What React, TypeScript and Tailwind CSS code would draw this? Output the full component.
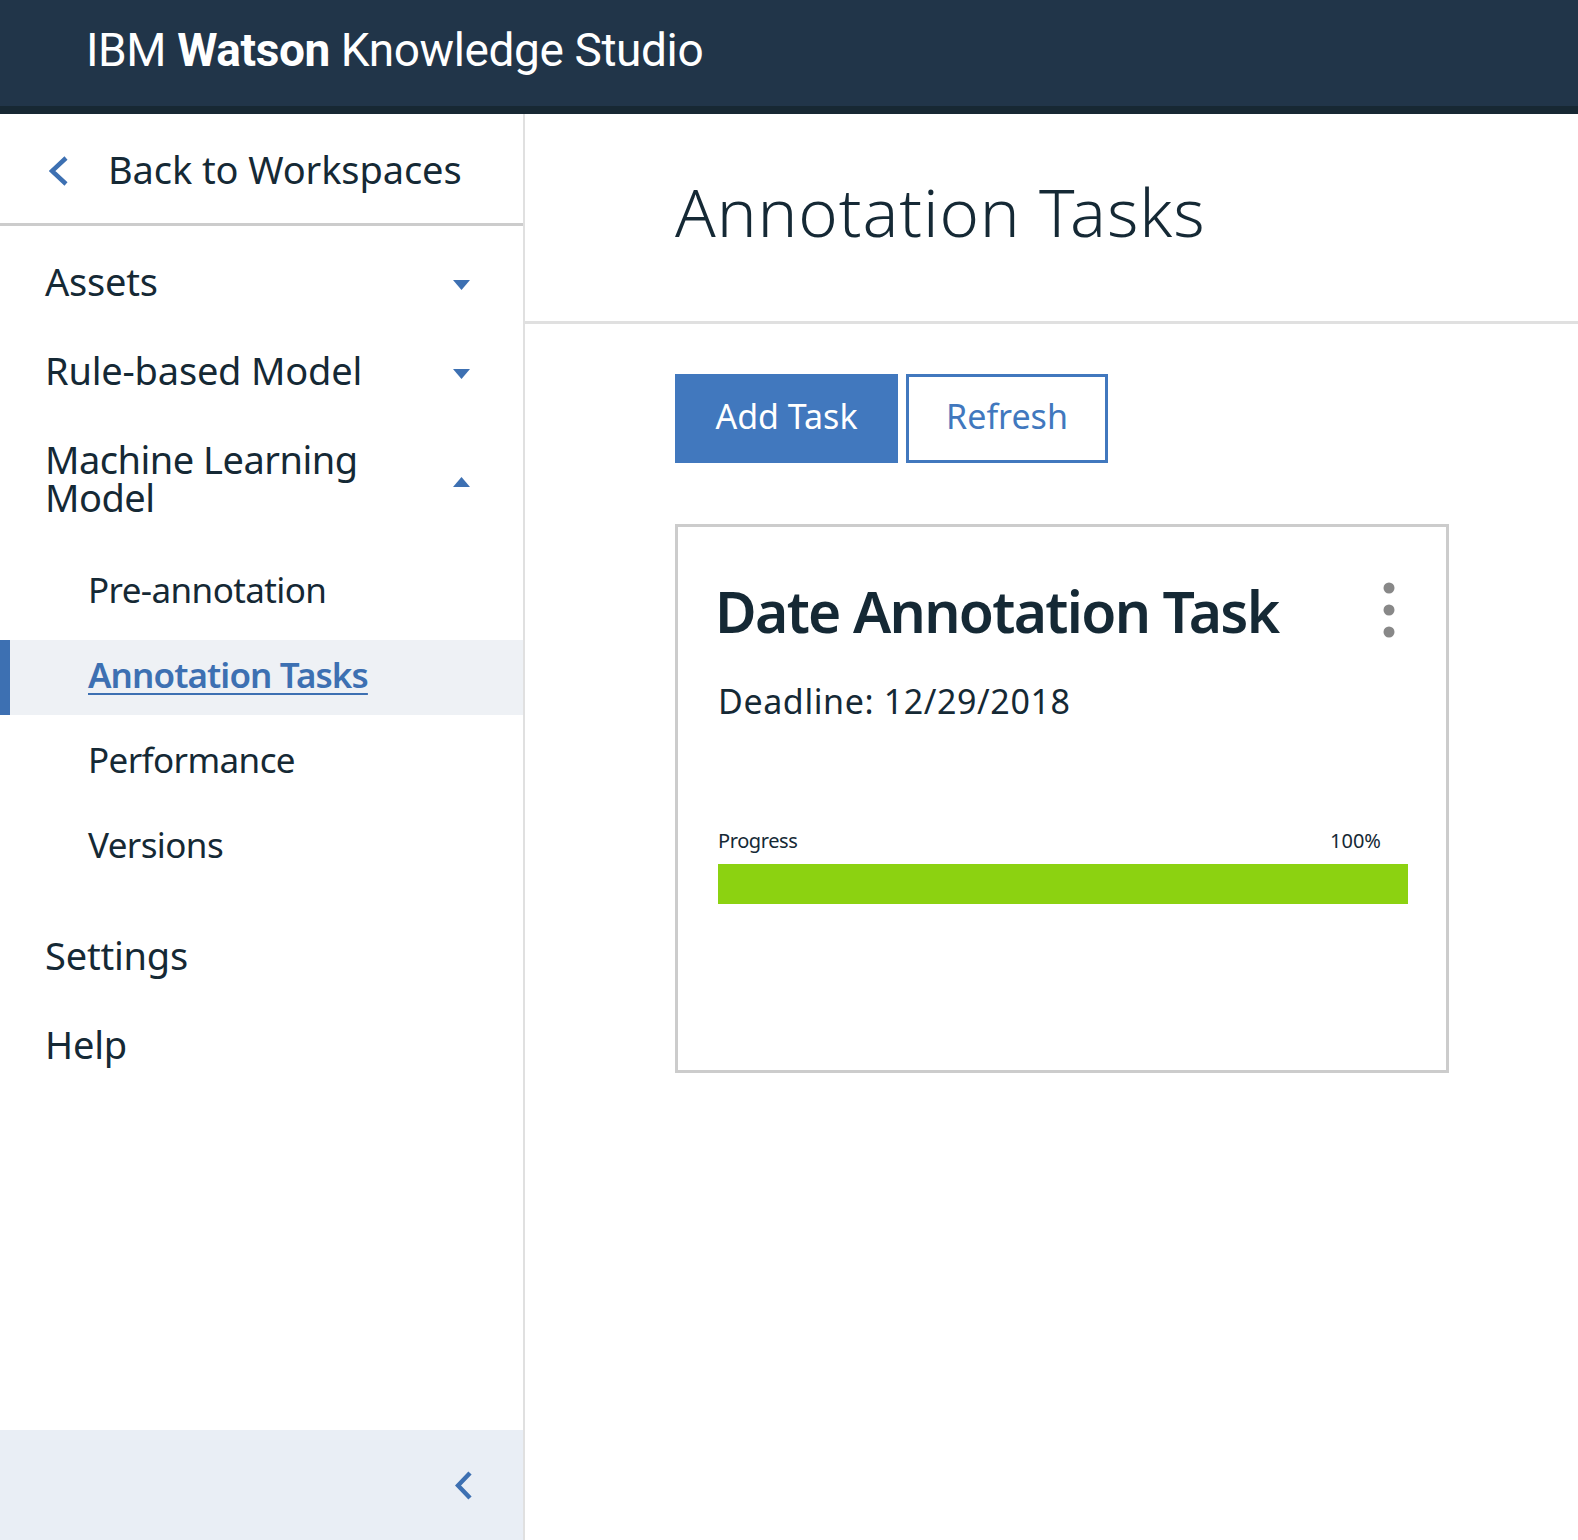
import React from "react";

function Triangle({ up = false }: { up?: boolean }) {
  return (
    <svg width="17" height="10" viewBox="0 0 17 10" className="shrink-0">
      {up ? <polygon points="0,10 17,10 8.5,0" fill="#3d70b2" /> : <polygon points="0,0 17,0 8.5,10" fill="#3d70b2" />}
    </svg>
  );
}

function Chevron({ w, h }: { w: number; h: number }) {
  return (
    <svg width={w} height={h} viewBox={`0 0 ${w} ${h}`} className="shrink-0">
      <polyline
        points={`${w - 3},2 3,${h / 2} ${w - 3},${h - 2}`}
        fill="none"
        stroke="#3d70b2"
        strokeWidth="4.5"
        strokeLinejoin="miter"
      />
    </svg>
  );
}

function TopItem({ label, icon }: { label: string; icon?: "down" | "up" }) {
  return (
    <div className="h-[89px] flex items-center justify-between pl-[45px] pr-[53px]">
      <span className="text-[38px] leading-[38px] text-[#152935] tracking-[-0.2px]">{label}</span>
      {icon && (
        <span className="mt-[9px]">
          <Triangle up={icon === "up"} />
        </span>
      )}
    </div>
  );
}

function SubItem({ label, active = false }: { label: string; active?: boolean }) {
  return (
    <div className={`h-[75px] flex items-center pb-[6px] pl-[88px] relative ${active ? "bg-[#eef1f5]" : ""}`}>
      {active && <div className="absolute left-0 top-0 bottom-0 w-[10px] bg-[#3d70b2]" />}
      <span
        className={`text-[35px] leading-[35px] ${
          active
            ? "font-semibold text-[#3d70b2] underline underline-offset-[5px] decoration-[2px] tracking-[-0.9px]"
            : "text-[#152935] tracking-[-0.6px]"
        }`}
      >
        {label}
      </span>
    </div>
  );
}

export default function App() {
  return (
    <div className="w-full h-[1540px] flex flex-col font-['Noto_Sans',sans-serif] bg-white overflow-hidden">
      {/* Header */}
      <header className="h-[106px] bg-[#213549] flex items-start pt-[27px] pl-[86px] shrink-0">
        <span className="font-['Roboto',sans-serif] text-[46px] leading-[46px] text-white tracking-[-0.4px]">
          IBM <span className="font-bold">Watson</span> Knowledge Studio
        </span>
      </header>
      <div className="h-[8px] bg-[#172833] shrink-0" />

      <div className="flex flex-1 min-h-0">
        {/* Sidebar */}
        <aside className="w-[525px] shrink-0 border-r-2 border-[#e0e0e0] flex flex-col">
          <div className="h-[109px] flex items-center pl-[49px] shrink-0">
            <span className="mt-[5px]">
              <Chevron w={20} h={30} />
            </span>
            <span className="ml-[39px] text-[38px] leading-[38px] text-[#152935] tracking-[-0.1px]">
              Back to Workspaces
            </span>
          </div>
          <div className="h-[3px] bg-[#cccccc] shrink-0" />

          <nav className="pt-[10px] flex flex-col">
            <TopItem label="Assets" icon="down" />
            <TopItem label="Rule-based Model" icon="down" />
            <div className="flex items-start justify-between pl-[45px] pr-[53px] pt-[26px]">
              <span className="text-[38px] leading-[38px] text-[#152935] w-[330px] tracking-[-0.5px]">
                Machine Learning Model
              </span>
              <span className="mt-[37px]">
                <Triangle up />
              </span>
            </div>
            <div className="mt-[39px] flex flex-col gap-[10px]">
              <SubItem label="Pre-annotation" />
              <SubItem label="Annotation Tasks" active />
              <SubItem label="Performance" />
              <SubItem label="Versions" />
            </div>
            <div className="mt-[25px]">
              <TopItem label="Settings" />
              <TopItem label="Help" />
            </div>
          </nav>

          <div className="flex-1" />
          <div className="h-[110px] bg-[#e9eef5] flex items-center justify-end pr-[50px] shrink-0">
            <Chevron w={18} h={29} />
          </div>
        </aside>

        {/* Main */}
        <main className="flex-1 flex flex-col min-w-0">
          <div className="h-[207px] pt-[64px] pl-[150px] shrink-0">
            <h1 className="text-[67px] leading-[67px] font-light text-[#152935] tracking-[0.9px]">Annotation Tasks</h1>
          </div>
          <div className="h-[3px] bg-[#e0e0e0] shrink-0" />

          <div className="pl-[150px] pt-[50px]">
            <div className="flex gap-[8px]">
              <button className="w-[223px] h-[89px] bg-[#4178be] text-white text-[34px] leading-[34px] pb-[6px]">
                Add Task
              </button>
              <button className="w-[202px] h-[89px] border-[3px] border-[#4178be] bg-white text-[#4178be] text-[34px] leading-[34px] pb-[6px]">
                Refresh
              </button>
            </div>

            <div className="mt-[61px] w-[774px] h-[549px] border-[3px] border-[#cccccc] pt-[56px] px-[40px] pr-[38px]">
              <div className="flex items-start justify-between pr-[13px]">
                <h2 className="text-[57px] leading-[57px] font-semibold text-[#152935] -ml-[3px] tracking-[-1.7px]">
                  Date Annotation Task
                </h2>
                <svg width="12" height="56" viewBox="0 0 12 56" className="mt-[-1px] shrink-0">
                  <circle cx="6" cy="6" r="5.5" fill="#888888" />
                  <circle cx="6" cy="28" r="5.5" fill="#888888" />
                  <circle cx="6" cy="50" r="5.5" fill="#888888" />
                </svg>
              </div>
              <div className="mt-[44px] text-[34px] leading-[34px] text-[#152935] tracking-[0.6px]">
                Deadline: 12/29/2018
              </div>
              <div className="mt-[113px] flex justify-between pr-[27px] text-[20px] leading-[20px] text-[#152935]">
                <span className="tracking-[-0.4px]">Progress</span>
                <span>100%</span>
              </div>
              <div className="mt-[13px] h-[40px] bg-[#8cd211]" />
            </div>
          </div>
        </main>
      </div>
    </div>
  );
}
